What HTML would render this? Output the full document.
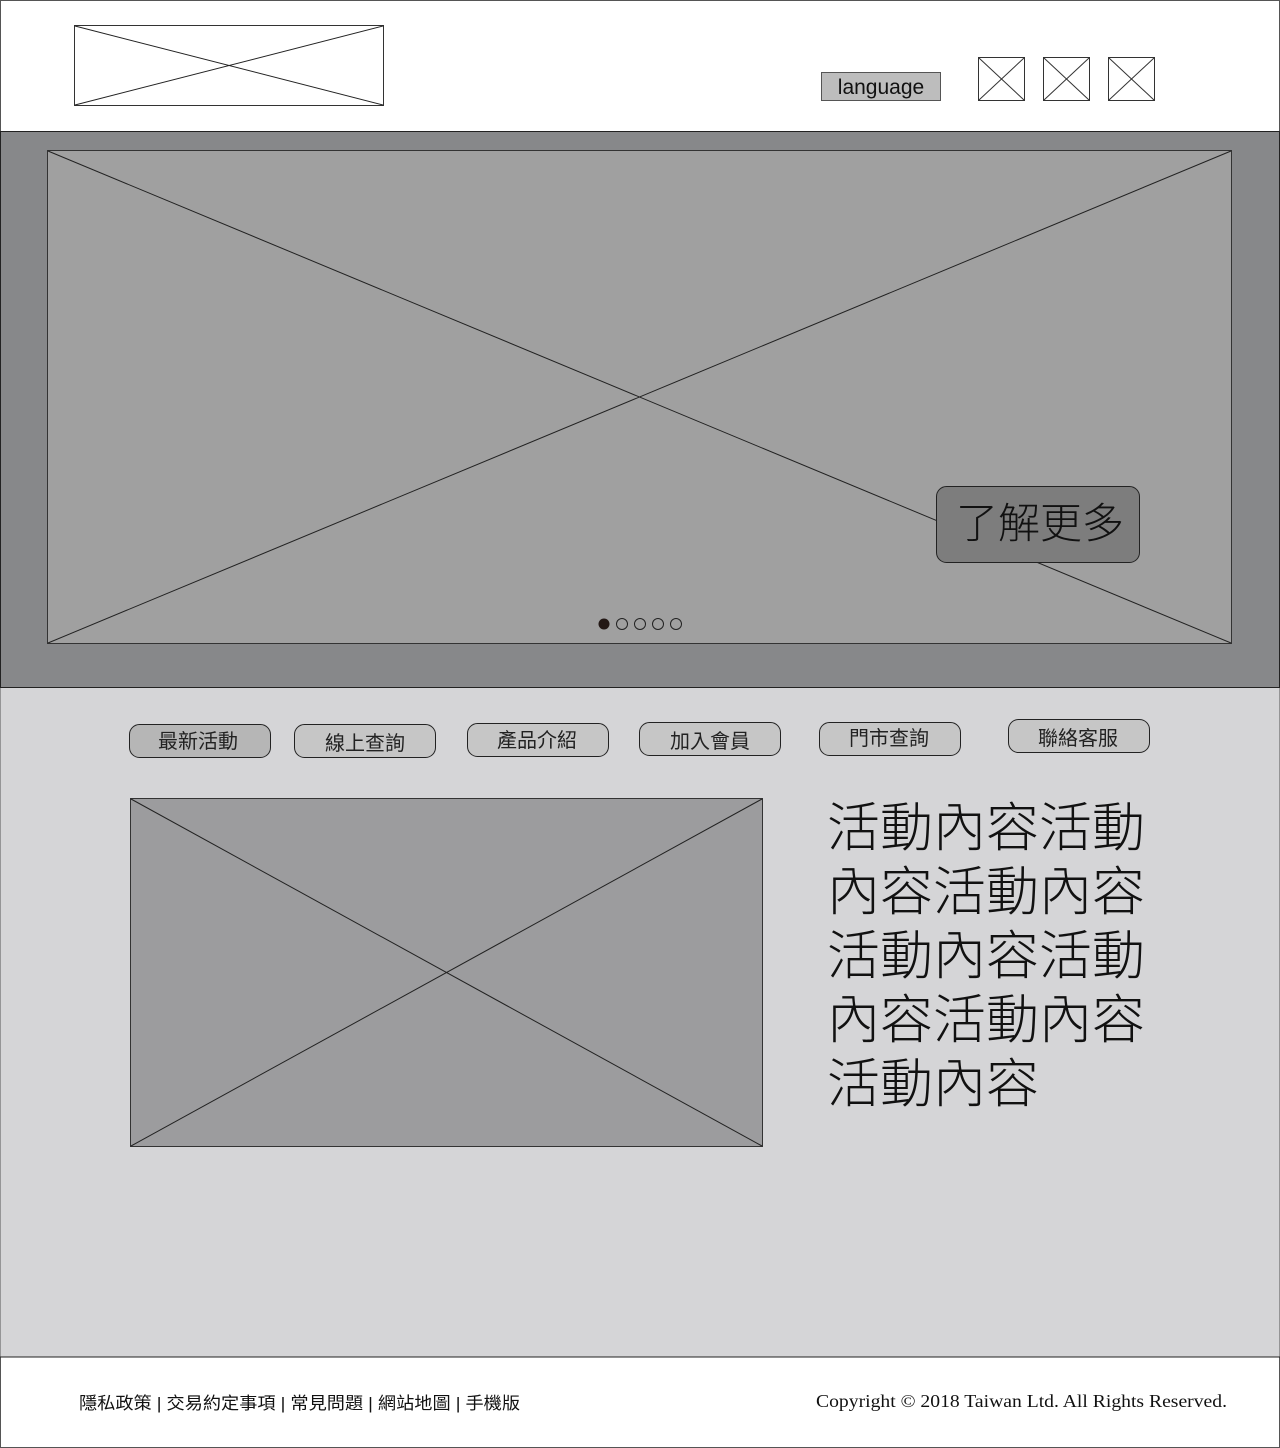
<!DOCTYPE html>
<html><head><meta charset="utf-8"><style>
html,body{margin:0;padding:0;background:#fff}
svg{display:block}
text{font-family:"Liberation Sans","Noto Sans CJK TC",sans-serif}
text.serif{font-family:"Liberation Serif","Noto Serif CJK SC",serif}
</style></head><body>
<svg width="1280" height="1448" viewBox="0 0 1280 1448" xmlns="http://www.w3.org/2000/svg">
<rect x="0.5" y="0.5" width="1279" height="1447" fill="#fff" stroke="#555"/>
<rect x="74.5" y="25.5" width="309" height="80" fill="#fff" stroke="#333"/>
<line x1="75" y1="26" x2="383" y2="105" stroke="#222"/><line x1="75" y1="105" x2="383" y2="26" stroke="#222"/>
<rect x="821.5" y="72.5" width="119" height="28" fill="#bdbdbd" stroke="#555"/>
<text x="881" y="94" font-size="21" text-anchor="middle" fill="#111">language</text>
<g stroke="#333" fill="#fff">
<rect x="978.5" y="57.5" width="46" height="43"/><line x1="979" y1="58" x2="1024" y2="100"/><line x1="979" y1="100" x2="1024" y2="58"/>
<rect x="1043.5" y="57.5" width="46" height="43"/><line x1="1044" y1="58" x2="1089" y2="100"/><line x1="1044" y1="100" x2="1089" y2="58"/>
<rect x="1108.5" y="57.5" width="46" height="43"/><line x1="1109" y1="58" x2="1154" y2="100"/><line x1="1109" y1="100" x2="1154" y2="58"/>
</g>
<rect x="0.5" y="131.5" width="1279" height="556" fill="#87888a" stroke="#222"/>
<rect x="47.5" y="150.5" width="1184" height="493" fill="#a0a0a0" stroke="#333"/>
<line x1="48" y1="151" x2="1231" y2="643" stroke="#222"/><line x1="48" y1="643" x2="1231" y2="151" stroke="#222"/>
<rect x="936.5" y="486.5" width="203" height="76" rx="10" fill="#7d7d7d" stroke="#222"/>
<text x="1040" y="538" font-size="42" text-anchor="middle" fill="#111" font-weight="300">了解更多</text>
<circle cx="604" cy="624" r="5.5" fill="#231815"/>
<g fill="none" stroke="#222"><circle cx="622" cy="624" r="5.5"/><circle cx="640" cy="624" r="5.5"/><circle cx="658" cy="624" r="5.5"/><circle cx="676" cy="624" r="5.5"/></g>
<rect x="0.5" y="688" width="1279" height="669" fill="#d5d5d7"/>
<g stroke="#222" fill="#c6c6c6">
<rect x="129.5" y="724.5" width="141" height="33" rx="10" fill="#b6b6b6"/>
<rect x="294.5" y="724.5" width="141" height="33" rx="10"/>
<rect x="467.5" y="723.5" width="141" height="33" rx="10"/>
<rect x="639.5" y="722.5" width="141" height="33" rx="10"/>
<rect x="819.5" y="722.5" width="141" height="33" rx="10"/>
<rect x="1008.5" y="719.5" width="141" height="33" rx="10"/>
</g>
<g font-size="20" text-anchor="middle" fill="#222">
<text x="198" y="748">最新活動</text>
<text x="365" y="750">線上查詢</text>
<text x="537" y="747">產品介紹</text>
<text x="710" y="748">加入會員</text>
<text x="889" y="745">門市查詢</text>
<text x="1078" y="745">聯絡客服</text>
</g>
<rect x="130.5" y="798.5" width="632" height="348" fill="#9c9c9e" stroke="#333"/>
<line x1="131" y1="799" x2="762" y2="1146" stroke="#222"/><line x1="131" y1="1146" x2="762" y2="799" stroke="#222"/>
<g font-size="53" fill="#111" font-weight="300">
<text x="827" y="846">活動內容活動</text>
<text x="827" y="910">內容活動內容</text>
<text x="827" y="974">活動內容活動</text>
<text x="827" y="1038">內容活動內容</text>
<text x="827" y="1102">活動內容</text>
</g>
<line x1="0" y1="1357" x2="1280" y2="1357" stroke="#222"/>
<text x="79" y="1409" font-size="17" fill="#111" textLength="441" lengthAdjust="spacingAndGlyphs">隱私政策 | 交易約定事項 | 常見問題 | 網站地圖 | 手機版</text>
<text class="serif" x="816" y="1407" font-size="18" fill="#111" textLength="411" lengthAdjust="spacingAndGlyphs">Copyright © 2018 Taiwan Ltd. All Rights Reserved.</text>
</svg>
</body></html>
